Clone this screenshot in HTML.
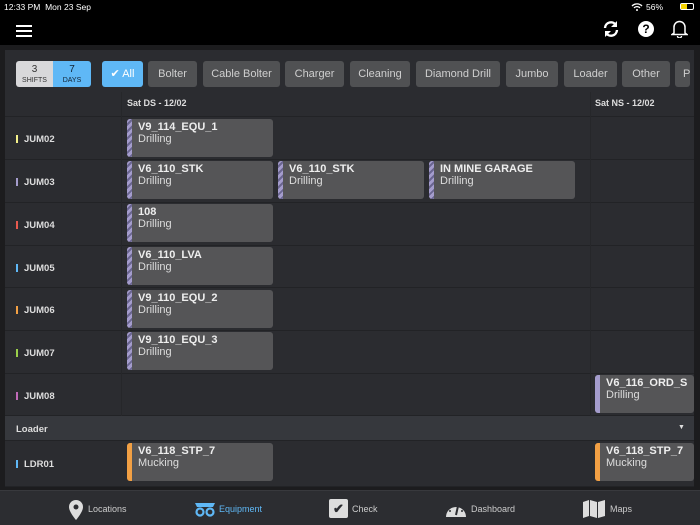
<!DOCTYPE html><html><head><style>
*{margin:0;padding:0;box-sizing:border-box}
body{width:700px;height:525px;background:#1c1c1e;font-family:"Liberation Sans",sans-serif;position:relative;overflow:hidden;color:#ddd}
.a{position:absolute}
.btn{position:absolute;top:61px;height:26px;background:#505153;border-radius:3px;color:#cfcfcf;font-size:11px;line-height:26px;text-align:center}
.row{position:absolute;left:5px;width:689px;background:#2b2c30;border-bottom:1px solid #222326}
.lbl{position:absolute;left:16px;font-size:9.5px;font-weight:bold;color:#ddd}
.lbl i{display:inline-block;width:2px;height:8px;margin-right:6px;vertical-align:-1px}
.card{position:absolute;height:38px;background:#555557;border-radius:3px;padding:2px 0 0 11px;font-size:11px;color:#eee;overflow:hidden;white-space:nowrap}
.card b{display:block;line-height:12px}
.card span{display:block;line-height:13px;color:#ddd}
.card:before{content:"";position:absolute;left:0;top:0;bottom:0;width:5px;background:repeating-linear-gradient(135deg,#a49ccc 0 3px,#6a6590 3px 5px)}
.card.o:before{background:#f2a044}
.card.p:before{background:#a49ccc}
.tab{position:absolute;top:498px;font-size:9px;color:#ccc;line-height:22px}
</style></head><body>
<div class="a" style="left:0;top:0;width:700px;height:45px;background:#000"></div>
<div class="a" style="left:4px;top:2px;font-size:8.5px;color:#fff">12:33 PM &nbsp;Mon 23 Sep</div>
<div class="a" style="left:646px;top:2px;font-size:8.5px;color:#fff">56%</div>
<svg class="a" style="left:631px;top:3px" width="12" height="8" viewBox="0 0 12 8"><path d="M1 3a7 7 0 0 1 10 0M3 5a4 4 0 0 1 6 0" stroke="#fff" stroke-width="1.3" fill="none"/><circle cx="6" cy="7" r="1" fill="#fff"/></svg>
<div class="a" style="left:680px;top:3px;width:14px;height:7px;border:1px solid #fff;border-radius:2px"><div style="width:6px;height:5px;background:#f5d300"></div></div>
<div class="a" style="left:16px;top:25px;width:16px;height:2px;background:#fff;box-shadow:0 5px 0 #fff,0 10px 0 #fff"></div>
<svg class="a" style="left:602px;top:20px" width="18" height="18" viewBox="0 0 18 18"><path d="M3 8a6 6 0 0 1 11-3M15 10a6 6 0 0 1-11 3" stroke="#fff" stroke-width="2.4" fill="none"/><path d="M15 1v6h-6zM3 17v-6h6z" fill="#fff"/></svg>
<div class="a" style="left:638px;top:21px;width:16px;height:16px;border-radius:50%;background:#fff;color:#000;font-weight:bold;font-size:12px;text-align:center;line-height:16px">?</div>
<svg class="a" style="left:671px;top:19px" width="17" height="19" viewBox="0 0 17 19"><path d="M3 14V8a5.5 5.5 0 0 1 11 0v6l2 1.5H1z" stroke="#fff" stroke-width="1.5" fill="none"/><path d="M6.5 17a2 2 0 0 0 4 0" stroke="#fff" stroke-width="1.4" fill="none"/></svg>
<div class="a" style="left:5px;top:50px;width:689px;height:437px;background:#2b2c30"></div>
<div class="a" style="left:16px;top:61px;width:37px;height:26px;background:#d8d8da;border-radius:3px 0 0 3px;color:#333;text-align:center;font-size:10px;line-height:10px;padding-top:4px">3<br><span style="font-size:7px">SHIFTS</span></div>
<div class="a" style="left:53px;top:61px;width:38px;height:26px;background:#5fb8f6;border-radius:0 3px 3px 0;color:#123;text-align:center;font-size:10px;line-height:10px;padding-top:4px">7<br><span style="font-size:7px">DAYS</span></div>
<div class="btn" style="left:102px;width:41px;background:#5fb8f6;color:#fff">✔ All</div>
<div class="btn" style="left:148px;width:49px">Bolter</div>
<div class="btn" style="left:203px;width:77px">Cable Bolter</div>
<div class="btn" style="left:285px;width:59px">Charger</div>
<div class="btn" style="left:350px;width:60px">Cleaning</div>
<div class="btn" style="left:416px;width:84px">Diamond Drill</div>
<div class="btn" style="left:506px;width:52px">Jumbo</div>
<div class="btn" style="left:564px;width:53px">Loader</div>
<div class="btn" style="left:622px;width:48px">Other</div>
<div class="btn" style="left:675px;width:15px;text-align:left;padding-left:8px;overflow:hidden">P</div>
<div class="a" style="left:127px;top:98px;font-size:9px;font-weight:bold;color:#ddd">Sat DS - 12/02</div>
<div class="a" style="left:595px;top:98px;font-size:9px;font-weight:bold;color:#ddd">Sat NS - 12/02</div>
<div class="a" style="left:5px;top:116px;width:689px;height:1px;background:#222326"></div>
<div class="row" style="top:117px;height:43px"></div>
<div class="row" style="top:160px;height:43px"></div>
<div class="row" style="top:203px;height:43px"></div>
<div class="row" style="top:246px;height:42px"></div>
<div class="row" style="top:288px;height:43px"></div>
<div class="row" style="top:331px;height:43px"></div>
<div class="row" style="top:374px;height:42px"></div>
<div class="row" style="top:416px;height:25px;background:#36383d"></div>
<div class="row" style="top:441px;height:46px"></div>
<div class="a" style="left:121px;top:92px;width:1px;height:324px;background:#26272a"></div>
<div class="a" style="left:590px;top:92px;width:1px;height:324px;background:#26272a"></div>
<div class="lbl" style="top:134px"><i style="background:#f4f08a"></i>JUM02</div>
<div class="lbl" style="top:177px"><i style="background:#a49ccc"></i>JUM03</div>
<div class="lbl" style="top:220px"><i style="background:#e85a4f"></i>JUM04</div>
<div class="lbl" style="top:263px"><i style="background:#5fb8f6"></i>JUM05</div>
<div class="lbl" style="top:305px"><i style="background:#f2a044"></i>JUM06</div>
<div class="lbl" style="top:348px"><i style="background:#9ad04a"></i>JUM07</div>
<div class="lbl" style="top:391px"><i style="background:#c06ab8"></i>JUM08</div>
<div class="a" style="left:16px;top:424px;font-size:9.5px;font-weight:bold;color:#ddd">Loader</div>
<div class="a" style="left:678px;top:424px;font-size:7px;color:#ddd">▼</div>
<div class="lbl" style="top:459px"><i style="background:#5fb8f6"></i>LDR01</div>
<div class="card" style="left:127px;top:119px;width:146px"><b>V9_114_EQU_1</b><span>Drilling</span></div>
<div class="card" style="left:127px;top:161px;width:146px"><b>V6_110_STK</b><span>Drilling</span></div>
<div class="card" style="left:278px;top:161px;width:146px"><b>V6_110_STK</b><span>Drilling</span></div>
<div class="card" style="left:429px;top:161px;width:146px"><b>IN MINE GARAGE</b><span>Drilling</span></div>
<div class="card" style="left:127px;top:204px;width:146px"><b>108</b><span>Drilling</span></div>
<div class="card" style="left:127px;top:247px;width:146px"><b>V6_110_LVA</b><span>Drilling</span></div>
<div class="card" style="left:127px;top:290px;width:146px"><b>V9_110_EQU_2</b><span>Drilling</span></div>
<div class="card" style="left:127px;top:332px;width:146px"><b>V9_110_EQU_3</b><span>Drilling</span></div>
<div class="card p" style="left:595px;top:375px;width:99px"><b>V6_116_ORD_S</b><span>Drilling</span></div>
<div class="card o" style="left:127px;top:443px;width:146px"><b>V6_118_STP_7</b><span>Mucking</span></div>
<div class="card o" style="left:595px;top:443px;width:99px"><b>V6_118_STP_7</b><span>Mucking</span></div>
<div class="a" style="left:0;top:490px;width:700px;height:35px;background:#2c2d31;border-top:1px solid #38393d"></div>
<svg class="a" style="left:69px;top:500px" width="14" height="20" viewBox="0 0 14 20"><path d="M7 0a7 7 0 0 0-7 7c0 5 7 13 7 13s7-8 7-13a7 7 0 0 0-7-7z" fill="#ddd"/><circle cx="7" cy="7" r="2.5" fill="#2c2d31"/></svg>
<div class="tab" style="left:88px">Locations</div>
<svg class="a" style="left:194px;top:502px" width="22" height="15" viewBox="0 0 22 15"><path d="M1 1h20l-2 4H3z" fill="#5fb8f6"/><circle cx="6" cy="10" r="3.5" stroke="#5fb8f6" stroke-width="2.2" fill="none"/><circle cx="16" cy="10" r="3.5" stroke="#5fb8f6" stroke-width="2.2" fill="none"/></svg>
<div class="tab" style="left:219px;color:#5fb8f6">Equipment</div>
<div class="a" style="left:329px;top:499px;width:19px;height:19px;background:#ddd;border-radius:2px;color:#2c2d31;font-size:13px;text-align:center;line-height:19px;font-weight:bold">✔</div>
<div class="tab" style="left:352px">Check</div>
<svg class="a" style="left:445px;top:500px" width="22" height="18" viewBox="0 0 22 18"><path d="M1 17a10 10 0 1 1 20 0z" fill="#ddd"/><path d="M11 15l2-9" stroke="#2c2d31" stroke-width="2"/><circle cx="5" cy="11" r="1" fill="#2c2d31"/><circle cx="7" cy="6" r="1" fill="#2c2d31"/><circle cx="17" cy="11" r="1" fill="#2c2d31"/></svg>
<div class="tab" style="left:471px">Dashboard</div>
<svg class="a" style="left:583px;top:500px" width="22" height="18" viewBox="0 0 22 18"><path d="M0 2l6-2v16l-6 2zM7 0l7 2v16l-7-2zM15 2l7-2v16l-7 2z" fill="#ddd"/></svg>
<div class="tab" style="left:610px">Maps</div>
</body></html>
